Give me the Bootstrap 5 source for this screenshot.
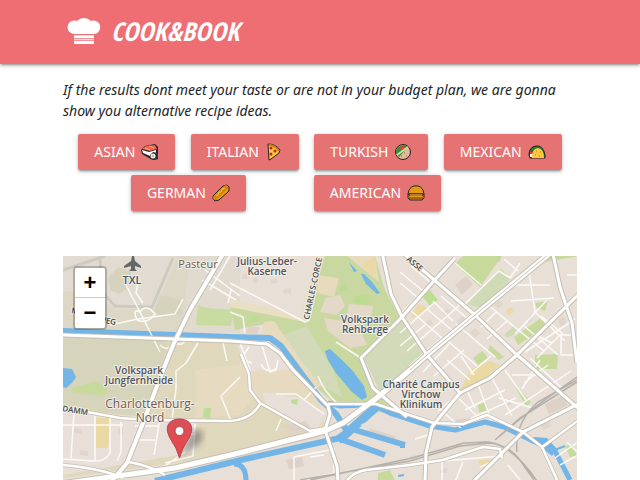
<!DOCTYPE html>
<html lang="en">
<head>
<meta charset="utf-8">
<meta name="viewport" content="width=device-width, initial-scale=1">
<title>Cook&amp;Book</title>
<link href="https://cdn.jsdelivr.net/npm/bootstrap@5.3.0/dist/css/bootstrap.min.css" rel="stylesheet">
<style>
body{font-family:"Noto Sans","Open Sans",sans-serif;color:#212529;font-size:14px;line-height:21px}
.topbar{background:#ee6e73;height:64px;box-shadow:0 2px 2px rgba(0,0,0,.14),0 3px 1px -2px rgba(0,0,0,.12),0 1px 5px rgba(0,0,0,.2)}
.wrap{width:85%;padding:0 15px}
.brand{font:italic 700 26px/36px "Liberation Sans Narrow","Open Sans Condensed","Liberation Sans",sans-serif;color:#fff;gap:8px}
.intro{margin:15px 0 13px}
.kinds{row-gap:5px;margin-bottom:45px}
.kind{background:#e57373;color:#fff;height:36px;padding:0 16px;border:0;border-radius:2px;font-size:14px;line-height:36px;gap:6px;box-shadow:0 2px 2px rgba(0,0,0,.14),0 3px 1px -2px rgba(0,0,0,.12),0 1px 5px rgba(0,0,0,.2)}
.kind:hover{background:#ec8a8a;color:#fff}
.map{background:#e7dfd5;min-height:224px}
.map-art{left:0;top:0;width:100%;height:100%}
.zoomer{left:10px;top:10px;border:2px solid rgba(0,0,0,.22);border-radius:4px;background-clip:padding-box}
.zoomer button{width:30px;height:30px;border:0;background:#fff;color:#000;font:700 22px/30px "Liberation Sans",sans-serif;padding:0}
.zoomer button:first-child{border-bottom:1px solid #ccc;border-radius:2px 2px 0 0}
.zoomer button:last-child{border-radius:0 0 2px 2px}
.lbl{font:600 10px "Open Sans","Noto Sans",sans-serif;fill:#4d5260;stroke:#f4efe6;stroke-width:2px;paint-order:stroke;stroke-linejoin:round;text-anchor:middle}
.place{font-weight:400;font-size:12px;fill:#70594f}
.street{font-size:9px;fill:#444;text-anchor:start}
</style>
</head>
<body class="d-flex flex-column min-vh-100">
<header class="topbar d-flex align-items-center">
 <div class="wrap mx-auto">
  <a class="brand d-inline-flex align-items-center text-decoration-none" href="#">
   <svg width="40" height="32" viewBox="0 0 40 32" fill="#fff" aria-hidden="true"><path d="M11 19A6.500 6.500 0 1 1 11.500 5.500Q14 6 15 5.500C17 2 25 2 27 5.500Q28 6 30 5.500A6.500 6.500 0 1 1 31 19ZM11 20.300h20v3H11zM11 24.300h20v.9H11zM11 26h20v3H11z"/></svg>
   <span>COOK&amp;BOOK</span></a>
 </div>
</header>
<main class="wrap mx-auto d-flex flex-column flex-grow-1">
 <p class="intro fst-italic">If the results dont meet your taste or are not in your budget plan, we are gonna show you alternative recipe ideas.</p>
 <div class="kinds d-flex flex-wrap justify-content-evenly">
  <button class="kind btn d-inline-flex align-items-center" type="button">ASIAN
   <svg width="18" height="18" viewBox="0 0 18 18" aria-hidden="true"><path d="M0 7 4 3 14 1 17 4V16L13 17 8 15 1 11Z" fill="#222"/><path d="M1 7 8 9 15 7V12L9 13 2 10Z" fill="#fff"/><path d="M1 6 5 3 14 2 16 6 9 8Z" fill="#f4604a"/><path d="m4 5 5 2M8 3l5 2" stroke="#ffab91"/><path d="M9 12 12 9 17 10V15L13 17 9 16Z" fill="#263238"/><circle cx="12" cy="13" r="2.500" fill="#eee"/><circle cx="12" cy="13" r="1" fill="#e0a32e"/></svg></button>
  <button class="kind btn d-inline-flex align-items-center" type="button">ITALIAN
   <svg width="18" height="18" viewBox="0 0 18 18" aria-hidden="true"><path d="M3 1Q11 1 15 7L14 10 6 16 4 17Z" fill="#ffc83d" stroke="#222"/><path d="M4 2Q10 2 14 8" fill="none" stroke="#cf791b" stroke-width="2"/><g fill="#c92020"><circle cx="6" cy="5" r="1.500"/><circle cx="10" cy="8" r="1.500"/><circle cx="6" cy="11" r="1.500"/></g></svg></button>
  <button class="kind btn d-inline-flex align-items-center" type="button">TURKISH
   <svg width="18" height="18" viewBox="0 0 18 18" aria-hidden="true"><circle cx="9" cy="9" r="7.500" fill="#e5b896" stroke="#222"/><path d="M2 10Q2 2 11 2L14 4 5 14Z" fill="#2f8f3d"/><path d="M5 6 8 3 12 4 9 8Z" fill="#ed3b2f"/><path d="M3 12 14 4" stroke="#c8e0a0" stroke-width="2"/><path d="M7 13h1M10 10h1M12 13h1" stroke="#9d7054"/></svg></button>
  <button class="kind btn d-inline-flex align-items-center" type="button">MEXICAN
   <svg width="18" height="18" viewBox="0 0 18 18" aria-hidden="true"><path d="M1 12Q1 4 8 3 15 2 17 12V15H2Z" fill="#267c35" stroke="#222"/><path d="M2 10h3v4H2z" fill="#fff"/><path d="M2 9h3v2H2z" fill="#e23b32"/><path d="M4 15Q4 5 10 5 16 6 16 15Z" fill="#ffc83d"/><path d="M8 8h1M12 9h1M7 12h1M11 13h1" stroke="#c87817"/></svg></button>
  <button class="kind btn d-inline-flex align-items-center" type="button">GERMAN
   <svg width="18" height="18" viewBox="0 0 18 18" aria-hidden="true"><path d="M1 12 11 2 15 1 17 3V7L7 16 3 17 1 15Z" fill="#e89a0c" stroke="#222"/><path d="M3 14 14 3" stroke="#d88008" stroke-width="4" stroke-linecap="round"/><path d="m4 12 2-1 1-3 2 0 1-3 3-1" fill="none" stroke="#ffca28" stroke-width="1"/></svg></button>
  <button class="kind btn d-inline-flex align-items-center" type="button">AMERICAN
   <svg width="18" height="18" viewBox="0 0 18 18" aria-hidden="true"><path d="M1 10Q2 3 7 2H11Q16 3 17 10V14L15 16H3L1 14Z" fill="#e89a0c" stroke="#222"/><path d="M1 9h16v3H1z" fill="#6b3218"/><path d="M3 11h12" stroke="#ffc83d"/><path d="M2 14h14" stroke="#5d2c13"/></svg></button>
  <span></span>
 </div>
 <section class="map position-relative flex-grow-1 overflow-hidden" aria-label="Map">
  <svg class="map-art position-absolute" viewBox="63 256 514 224" preserveAspectRatio="xMidYMin slice" role="img" aria-label="Street map of north-west Berlin">
   <defs><linearGradient id="pin" x2="0" y2="1"><stop stop-color="#d9505a"/><stop offset="1" stop-color="#e8474b"/></linearGradient>
   <filter id="soft"><feGaussianBlur stdDeviation="3"/></filter></defs>
   <path fill="#e8dfd7" d="M63 256h514v224H63z"/>
   <!-- land use -->
   <path fill="#ddd8c5" d="M63 256H222L178 334 63 330Z"/>
   <path fill="#e2dbd2" d="M63 256H178L155 308 115 310 96 293 63 291Z"/>
   <path fill="#e1dace" d="M190 256H240V333L181 332Z"/>
   <path fill="none" stroke="#cdcac0" stroke-width="3" d="M63 270 105 256M100 256 101 291 115 306 152 307 173 258"/>
   <path fill="#d6d3bd" d="M108 278 118 267 131 272 128 288 119 294 110 290ZM160 295 180 300 182 314 163 318 154 310Z"/>
   <path fill="#dfd8bd" d="M63 337 174 340 240 343 247 382 320 438 230 456 63 478Z"/>
   <path fill="#d6d4ba" d="M63 337 168 340 160 371 143 418 63 405Z"/>
   <path fill="#e8dfd8" d="M63 410 195 421V452L63 475Z"/>
   <path fill="#e6dac1" d="M243 345 290 370 320 402 325 429 300 430 254 397 240 415 195 418V370L240 365Z"/>
   <path fill="#e8dfd8" d="M237 345 282 355 288 370 248 371ZM262 392 300 398 325 414 315 432 266 405Z"/>
   <path fill="#e9dfc3" d="M230 300 275 308 307 322 262 319 230 308ZM325 256 310 320 300 320 315 256Z"/>
   <path fill="#c9d8a0" d="M325 256H375L385 290 400 317 362 358 377 394 405 418 370 410 336 405 316 387 300 366 275 322 235 330 230 307 305 322Z"/>
   <path fill="#d2dab9" d="M275 338 307 326 333 370 342 397 320 385 290 360ZM364 358 402 320 427 355 410 373 381 394Z"/>
   <path fill="#e7dabd" d="M317 275 339 278 334 297 318 293ZM347 256H375L379 282ZM264 322 274 321 305 366 322 386 310 390 285 347 262 333Z"/>
   <path fill="#e4d8c9" d="M326 298 340 295 345 306 336 315 320 312ZM349 304 373 306 370 323 347 316ZM324 318 357 323 367 345 350 348 328 331Z"/>
   <path fill="#b9dc91" d="M355 296 369 295 368 304 354 303ZM341 292 348 288 344 284 339 288Z"/>
   <path fill="#c8dba0" d="M198 305 207 308 233 310 231 326 196 325Z"/>
   <path fill="#bddd95" d="M422 296 430 290 438 300 430 306ZM491 258 501 255 500 261 494 264ZM204 408 211 408 210 419 203 417ZM99 442 107 442 107 448 98 448ZM291 400 298 399 297 405 291 403ZM251 316 260 317 258 322 250 321Z"/>
   <path fill="#c7da9b" d="M455 264 463 256H502L480 287ZM543 262 549 256 580 256ZM535 303 548 301 545 311 537 308ZM514 337 541 318 547 326 518 345ZM72 388 97 381 108 387 105 395 71 393ZM473 358 482 351 488 358 478 365ZM478 405 486 402 487 411 479 412ZM515 385 531 402 526 407 517 390ZM490 345 504 357 499 360 488 350ZM535 355 558 354 557 369H535ZM378 473 390 470 395 480H378ZM565 446 573 445 577 456 570 457Z"/>
   <path fill="#cfdbb4" d="M467 304 501 268 511 279 480 308ZM400 360 421 350 422 363 407 370ZM504 335 515 325 518 332 508 338Z"/>
   <path fill="#ead9a4" d="M96 418 111 418 108 448H96ZM460 391 470 370 490 361 500 365 484 380ZM411 316 418 304 427 308 418 318ZM506 310 512 307 513 313 508 315ZM478 460 490 460 492 466 480 466ZM362 265 375 257 376 277Z"/>
   <path fill="#ded2c8" d="M455 285 466 276 473 284 462 295ZM249 327 260 327 257 334 243 333ZM283 426 306 421 312 430 296 433ZM370 427 397 434 395 439 369 433ZM455 420 475 417 482 413 478 420 460 426ZM545 404 562 396 568 405 549 415ZM286 460 302 457 304 466 289 469Z"/>
   <g fill="#e0d6ce"><path d="M253 278h5v5h-5zM263 270h4v6h-4zM270 280l7-2v5l-6 1zM283 290l8-2v5l-7 1zM242 275l5-2v6h-5zM425 323l5-4 3 5-5 4zM442 313l6-5 4 5-6 5zM457 321l6-5 4 5-6 5zM470 332l5-4 5 5-5 5zM494 304l5-4 4 5-5 4zM528 318l4-4v6l-4 3zM558 319l6-3 3 8-7 3zM410 456l8-1v4l-8 1zM440 470l7-2v5h-7zM504 402l6-3 2 5-6 3zM540 425l8-5 4 6-8 4zM74 428l8 1v5l-8-1zM80 450l8 1v5l-8-1zM118 428h5v7h-5zM171 440h7v4h-7zM166 382h7v4h-7z"/></g>
   <!-- water -->
   <g fill="none" stroke="#72b5e6" stroke-linejoin="round">
    <path stroke-width="6" d="M63 331 230 337 270 338 281 346 301 373 321 400 336 414 347 431"/>
    <path stroke-width="5" d="M328 403 340 406 374 405 390 413 430 426 455 430 485 422 504 427 533 441 555 451 570 480"/>
    <path stroke-width="9" d="M376 407 346 434 338 440"/>
    <path stroke-width="6" d="M340 438 245 459 155 481M355 430 405 445M340 439 385 455"/>
    <path stroke-width="5" d="M234 464Q246 464 246 481"/>
    <path stroke-width="2" d="M552 451 565 446M398 476l6-1"/>
   </g>
   <path fill="#72b5e6" d="M325 351 330 349 342 360 352 370 364 386 367 397 362 400 351 391 336 373 328 360ZM361 274 364 274 372 282 380 293 377 294 366 284ZM349 262 357 271 354 272ZM534 437 547 438 557 449 552 456 540 446 530 442ZM63 368 72 369 76 377 72 383 66 388 63 387ZM400 442l5 2v4h-5z"/>
   <path fill="#e8dfd8" d="M342 409 366 407 352 419 343 417ZM377 417 410 423V441L360 425Z"/>
   <!-- small streets -->
   <g fill="none" stroke="#fff" stroke-width="1.500" stroke-linejoin="round" opacity=".85">
    <path d="M125 283 143 318 160 352M139 279 136 293 143 303M110 325 138 319 175 314 183 299M140 312q-8-4-3 8 10 5 18-6-9-11-15-2M160 345q8 8 16-4M173 342q8 5 12-1"/>
    <path d="M205 270 240 296M202 280 236 300M230 256 210 290M231 290 228 303M230 283 305 322 309 320 316 290M230 312 243 317 245 333M336 342 361 358M240 343 250 370M249 347 244 354M262 345 270 372 276 370 278 360M223 343l4 18M198 343l-12 20-10 8v18l-4 30"/>
    <path d="M63 425h60M74 413l-3 45M95 416v45M110 418v35q-5 9-18 8L63 459M121 422v30l-4 9M160 418 154 455M135 426h24M137 440h18M171 421v13h25M195 424l-2 32-28 7M185 452l-20 14M240 377l-19 19 9 23"/>
    <path d="M276 394h20l28 20M316 387l-12 13M281 419l-5 12M252 363l-8-3M276 369q-10 5-15-5M318 376q6 16 19 27M294 480v-23l40-8v24l-28 7M310 457l14-2"/>
    <path d="M400 272l23 19-23 24M400 283l17 14M411 266l18 15M400 333l34-30M407 351l54-47M419 360l51-45M400 346l25-21M455 263l26 22M433 301l20 20M427 309l26 22M441 296l27 23M410 310l32 28-33 28M443 337l34 29M456 324l39 33M491 356l-21 18M449 344l-26 28M464 350l-30 26M463 306l36-35 11 7 10-15M504 259l14 12M488 305l56 46M496 312l-15 15M507 321l-20 18M516 285h34M511 301l43-3M529 272l6 40M567 275h11M547 300l-32 34M535 312l30 29M524 326l34 29M541 316l22 18M561 335v20h12M572 335h-12M537 358l24-24M552 343l-18-9M525 352l50-33"/>
    <path d="M430 360l30 33M447 360l23 20M461 356l13 19M460 393l-22 18M456 396l23 22M467 390l8 18M478 384l13 36M492 378l20 38M505 370l21 30M465 410l40-20M470 419l46-21M440 409l21 19M499 398l34 10M540 360l-18 29M530 358l33 31M512 375h24M524 383l24-18M505 415l66-44M400 465l100-9M463 462l-8 20M508 465l12 15M442 462v18M415 439l13-4M560 465l18-10M555 458l23-16M567 442l11 11M480 467l17-7"/>
   </g>
   <!-- railways -->
   <g fill="none" stroke="#b5b0aa" stroke-width="1.500">
    <path d="M300 480 410 461 460 446 490 443Q512 445 537 481M310 480 412 458 464 443 488 442Q511 446 522 463L534 480M495 440 520 418 577 382M500 436Q530 409 577 377M517 452Q514 423 538 402L577 380"/>
   </g>
   <!-- main roads: casing, then fill -->
   <g fill="none" stroke-linejoin="round">
    <g stroke="#c6bfb4">
     <path stroke-width="6" d="M223 254 190 310 174 343 163 370 143 423 127 463 111 482"/>
     <path stroke-width="7" d="M60 484 175 468 235 454 325 431 343 423 378 397 410 370 427 355 475 315 549 254"/>
     <path stroke-width="5" d="M63 335 230 341 267 344 280 353 293 370 328 406 330 414 325 430 337 466 338 482M404 254 475 315 517 355 523 360 580 410M382 252 391 294 402 317 427 355 460 393M455 258 433 282 402 317 361 358 373 388 407 417M582 291 517 355 490 378 460 393 443 413 432 427 426 453 425 482M553 254 560 287 572 323 577 363M580 403 523 432 473 482"/>
     <path stroke-width="4" d="M60 407 120 418 147 420 230 421Q251 420 260 404M241 354 249 374 250 390 260 403 310 431 326 428M328 404 376 404 434 423 463 424 487 415 523 432 542 447 558 482M580 419 541 448M346 482Q353 472 366 470L410 465 443 460 483 447 500 449 502 458M63 465Q104 469 123 478M129 462Q151 466 165 475"/>
    </g>
    <g stroke="#fff">
     <path stroke-width="4" d="M223 254 190 310 174 343 163 370 143 423 127 463 111 482"/>
     <path stroke-width="5" d="M60 484 175 468 235 454 325 431 343 423 378 397 410 370 427 355 475 315 549 254"/>
     <path stroke-width="3" d="M63 335 230 341 267 344 280 353 293 370 328 406 330 414 325 430 337 466 338 482M404 254 475 315 517 355 523 360 580 410M382 252 391 294 402 317 427 355 460 393M455 258 433 282 402 317 361 358 373 388 407 417M582 291 517 355 490 378 460 393 443 413 432 427 426 453 425 482M553 254 560 287 572 323 577 363M580 403 523 432 473 482"/>
     <path stroke-width="2.500" d="M60 407 120 418 147 420 230 421Q251 420 260 404M241 354 249 374 250 390 260 403 310 431 326 428M328 404 376 404 434 423 463 424 487 415 523 432 542 447 558 482M580 419 541 448M346 482Q353 472 366 470L410 465 443 460 483 447 500 449 502 458M63 465Q104 469 123 478M129 462Q151 466 165 475"/>
    </g>
    <path stroke="#c6bfb4" d="M410 370 427 355 475 315 549 254"/>
   </g>
   <path fill="#666" d="M132 256h2l1 5 6 5v2l-6-2v3l2 2H129l2-2v-3l-7 2v-2l7-5Z"/>
   <g class="lbl">
    <text x="132" y="284" style="font-size:11px">TXL</text>
    <text x="198" y="268" class="place" style="font-size:11px">Pasteur</text>
    <text><tspan x="267" y="265">Julius-Leber-</tspan><tspan x="267" y="275">Kaserne</tspan></text>
    <text><tspan x="365" y="323">Volkspark</tspan><tspan x="365" y="333">Rehberge</tspan></text>
    <text><tspan x="139" y="374">Volkspark</tspan><tspan x="139" y="384">Jungfernheide</tspan></text>
    <text class="place"><tspan x="150" y="408">Charlottenburg-</tspan><tspan x="150" y="422">Nord</tspan></text>
    <text><tspan x="421" y="388">Charité Campus</tspan><tspan x="421" y="398">Virchow</tspan><tspan x="421" y="408">Klinikum</tspan></text>
    <text class="street" transform="translate(309 320) rotate(-78)" style="font-size:8px">CHARLES-CORCE</text>
    <text class="street" transform="translate(406 260) rotate(40)" style="font-size:8px">ASSE</text>
    <text class="street" transform="translate(71 313) rotate(10)" style="font-size:8px">M</text>
    <text class="street" transform="translate(98 322) rotate(10)" style="font-size:8px">WEG</text>
    <text class="street" transform="translate(62 411) rotate(9)" style="font-size:8px">DAMM</text>
   </g>
   <path d="M180 457 193 430q15-2 7 13Z" fill="#333" opacity=".4" filter="url(#soft)"/>
   <path d="M179.500 458Q177 448 170 438C163 425 171 419 179.500 419S196 425 189 438Q182 448 179.500 458Z" fill="url(#pin)" stroke="#b64046"/><circle cx="179.500" cy="431" r="4.500" fill="#fff" stroke="#b64046"/>
  </svg>
  <div class="zoomer position-absolute d-flex flex-column"><button type="button" aria-label="Zoom in">+</button><button type="button" aria-label="Zoom out">−</button></div>
 </section>
</main>
<script src="https://cdn.jsdelivr.net/npm/bootstrap@5.3.0/dist/js/bootstrap.bundle.min.js"></script>
</body>
</html>
